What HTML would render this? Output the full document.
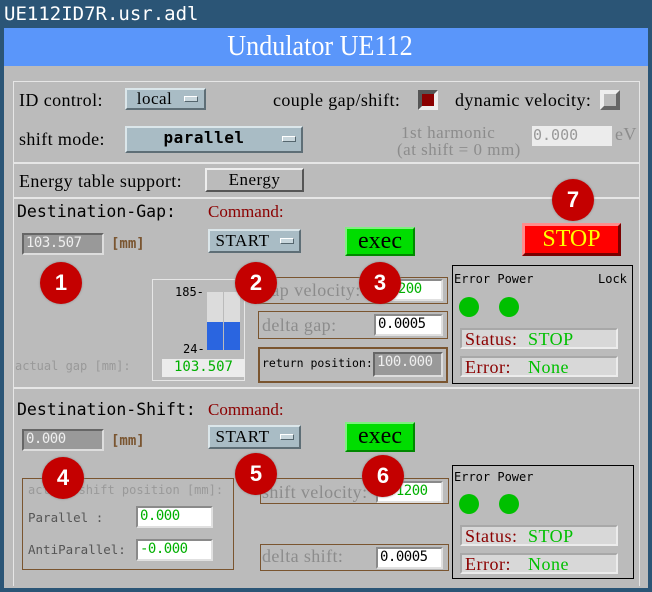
<!DOCTYPE html>
<html><head><meta charset="utf-8"><style>
*{margin:0;padding:0;box-sizing:border-box}
body{width:652px;height:592px;background:#2b5576;position:relative;overflow:hidden;font-family:"DejaVu Sans Condensed","Liberation Sans",sans-serif;}
.a{position:absolute;white-space:nowrap}
.t{font-size:18px;color:#000;font-family:"Liberation Serif",serif;letter-spacing:0.4px;line-height:20px}
.g{color:#8c8c8c}
.m{font-family:"DejaVu Sans Mono","Liberation Mono",monospace}
.btn{background:#a9bcc5;border:2px solid;border-color:#dbe6ea #5e6e76 #5e6e76 #dbe6ea;font-family:"Liberation Serif",serif;font-size:17px;text-align:center;letter-spacing:0.5px}
.ind{position:absolute;width:14px;height:6px;background:#c8d6dc;border:1px solid;border-color:#fff #55666e #55666e #fff}
.in{background:#fff;border:2px solid;border-color:#8a8a8a #e0e0e0 #e0e0e0 #8a8a8a;font-family:"DejaVu Sans Mono",monospace;font-size:14px;padding-left:2px;line-height:17px;letter-spacing:-0.5px}
.bx{border:1px solid #7a5530}
.badge{position:absolute;width:42px;height:42px;border-radius:50%;background:#c40000;color:#fff;font:bold 22px "Liberation Sans",sans-serif;text-align:center;line-height:42px;box-shadow:0 0 2px #888}
.led{position:absolute;width:20px;height:20px;border-radius:50%;background:#00c000}
.fld{position:absolute;background:#d8d8d8;border:2px solid;border-color:#a8a8a8 #ececec #ececec #a8a8a8;font-family:"Liberation Serif",serif;font-size:18px;letter-spacing:0.5px}
.exec{background:#00dd00;border:2px solid;border-color:#7ff07f #008800 #008800 #7ff07f;font-family:"Liberation Serif",serif;font-size:24px;text-align:center;line-height:24px}
</style></head><body>
<div class="a m" style="left:4px;top:3px;color:#fff;font-size:19px">UE112ID7R.usr.adl</div>
<div class="a" style="left:4px;top:28px;width:644px;height:560px;background:#bbbbbb"></div>
<div class="a" style="left:4px;top:28px;width:644px;height:38px;background:#5a96fa"></div>
<div class="a" style="left:217px;top:30px;width:200px;text-align:center;color:#fff;font:29px 'Liberation Serif',serif"><span style="display:inline-block;transform:scaleX(0.9)">Undulator UE112</span></div>
<!-- frame lines -->
<div class="a" style="left:13px;top:81px;width:627px;height:505px;border:1px solid #e6e6e6;border-bottom:none"></div>
<div class="a" style="left:13px;top:162px;width:627px;height:2px;background:#e6e6e6"></div>
<div class="a" style="left:13px;top:197px;width:627px;height:2px;background:#e6e6e6"></div>
<div class="a" style="left:13px;top:387px;width:627px;height:2px;background:#e6e6e6"></div>
<!-- row1 -->
<div class="a t" style="left:19px;top:90px">ID control:</div>
<div class="a btn" style="left:125px;top:88px;width:81px;height:22px;line-height:18px;padding-right:22px">local</div><div class="ind" style="left:184px;top:96px"></div>
<div class="a t" style="left:273px;top:90px">couple gap/shift:</div>
<div class="a" style="left:418px;top:90px;width:20px;height:20px;border:4px solid;border-color:#555 #eee #eee #555;background:#8b0000"></div>
<div class="a t" style="left:455px;top:90px">dynamic velocity:</div>
<div class="a" style="left:600px;top:90px;width:20px;height:20px;border:4px solid;border-color:#eee #666 #666 #eee;background:#bbb"></div>
<!-- row2 -->
<div class="a t" style="left:19px;top:129px">shift mode:</div>
<div class="a btn" style="left:125px;top:126px;width:178px;height:27px;line-height:22px;font:bold 16px 'DejaVu Sans Mono',monospace;padding-right:20px">parallel</div><div class="ind" style="left:282px;top:136px"></div>
<div class="a t g" style="left:401px;top:124px;font-size:17px;letter-spacing:0.5px;line-height:18px">1st harmonic</div>
<div class="a t g" style="left:397px;top:141px;font-size:17px;letter-spacing:0.5px;line-height:18px">(at shift = 0 mm)</div>
<div class="a m" style="left:532px;top:126px;width:80px;height:20px;background:#ececec;color:#999;font-size:15px;padding-left:1px">0.000</div>
<div class="a t g" style="left:615px;top:124px">eV</div>
<!-- row3 -->
<div class="a t" style="left:19px;top:171px">Energy table support:</div>
<div class="a btn" style="left:205px;top:168px;width:99px;height:24px;background:#bbb;border-color:#eee #555 #555 #eee;line-height:20px">Energy</div>
<!-- gap -->
<div class="a m" style="left:17px;top:202px;font-size:16.5px">Destination-Gap:</div>
<div class="a t" style="left:208px;top:202px;color:#8b0000;font-size:17px;letter-spacing:0">Command:</div>
<div class="a in" style="left:22px;top:233px;width:82px;height:22px;background:#999;color:#eee;border-color:#666 #ddd #ddd #666">103.507</div>
<div class="a m" style="left:111px;top:236px;color:#7a5530;font-weight:bold;font-size:14px">[mm]</div>
<div class="a btn" style="left:208px;top:229px;width:93px;height:24px;line-height:20px;padding-right:24px">START</div><div class="ind" style="left:280px;top:238px"></div>
<div class="a exec" style="left:345px;top:227px;width:70px;height:29px">exec</div>
<div class="a" style="left:522px;top:223px;width:99px;height:33px;background:#ff0000;border:3px solid;border-color:#ff8c8c #7a0000 #7a0000 #ff8c8c;color:#ffff00;font:24px 'Liberation Serif',serif;text-align:center;line-height:26px">STOP</div>
<div class="a" style="left:152px;top:279px;width:93px;height:102px;border:1px solid #e6e6e6"></div>
<div class="a m" style="left:175px;top:285px;font-size:12px">185-</div>
<div class="a m" style="left:183px;top:342px;font-size:12px">24-</div>
<div class="a" style="left:207px;top:292px;width:33px;height:30px;background:#dcdcdc"></div>
<div class="a" style="left:207px;top:322px;width:33px;height:28px;background:#2a65e0"></div>
<div class="a" style="left:223px;top:292px;width:1px;height:58px;background:#bbb"></div>
<div class="a m" style="left:162px;top:359px;width:83px;height:18px;background:#ececec;color:#00b000;font-size:14px;text-align:center">103.507</div>
<div class="a m g" style="left:15px;top:359px;font-size:12px;color:#999">actual gap [mm]:</div>
<div class="a bx" style="left:258px;top:277px;width:190px;height:27px"></div>
<div class="a t g" style="left:262px;top:280px">gap velocity:</div>
<div class="a in" style="left:378px;top:279px;width:65px;height:22px;color:#00b000">0.200</div>
<div class="a bx" style="left:258px;top:311px;width:190px;height:28px"></div>
<div class="a t g" style="left:262px;top:315px">delta gap:</div>
<div class="a in" style="left:374px;top:314px;width:69px;height:22px">0.0005</div>
<div class="a" style="left:258px;top:347px;width:190px;height:36px;border:2px solid #7a5530"></div>
<div class="a m" style="left:262px;top:356px;font-size:11.5px">return position:</div>
<div class="a in" style="left:373px;top:352px;width:70px;height:25px;background:#999;color:#eee;border-color:#666 #ddd #ddd #666">100.000</div>
<div class="a" style="left:452px;top:265px;width:181px;height:119px;border:1px solid #000"></div>
<div class="a m" style="left:454px;top:272px;font-size:12px">Error Power</div>
<div class="a m" style="left:598px;top:272px;font-size:12px">Lock</div>
<div class="led" style="left:459px;top:297px"></div><div class="led" style="left:499px;top:297px"></div>
<div class="fld" style="left:460px;top:328px;width:158px;height:21px"><span class="a" style="left:3px;top:-1px;color:#8b0000">Status:</span><span class="a" style="left:66px;top:-1px;color:#00c000">STOP</span></div>
<div class="fld" style="left:460px;top:356px;width:158px;height:21px"><span class="a" style="left:3px;top:-1px;color:#8b0000">Error:</span><span class="a" style="left:66px;top:-1px;color:#00c000">None</span></div>
<!-- shift -->
<div class="a m" style="left:17px;top:400px;font-size:16.5px">Destination-Shift:</div>
<div class="a t" style="left:208px;top:400px;color:#8b0000;font-size:17px;letter-spacing:0">Command:</div>
<div class="a in" style="left:22px;top:429px;width:82px;height:22px;background:#999;color:#eee;border-color:#666 #ddd #ddd #666">0.000</div>
<div class="a m" style="left:111px;top:433px;color:#7a5530;font-weight:bold;font-size:14px">[mm]</div>
<div class="a btn" style="left:208px;top:425px;width:93px;height:24px;line-height:20px;padding-right:24px">START</div><div class="ind" style="left:280px;top:434px"></div>
<div class="a exec" style="left:345px;top:422px;width:70px;height:30px">exec</div>
<div class="a bx" style="left:22px;top:478px;width:212px;height:92px"></div>
<div class="a m" style="left:28px;top:483px;font-size:12px;color:#999">actual shift position [mm]:</div>
<div class="a m" style="left:28px;top:510px;font-size:12.5px;color:#555">Parallel    :</div>
<div class="a m" style="left:28px;top:542px;font-size:12.5px;color:#555">AntiParallel:</div>
<div class="a in" style="left:136px;top:506px;width:77px;height:22px;color:#00b000">0.000</div>
<div class="a in" style="left:136px;top:539px;width:77px;height:22px;color:#00b000">-0.000</div>
<div class="a bx" style="left:260px;top:478px;width:189px;height:26px"></div>
<div class="a t g" style="left:262px;top:482px">shift velocity:</div>
<div class="a in" style="left:376px;top:481px;width:67px;height:22px;color:#00b000">0.1200</div>
<div class="a bx" style="left:260px;top:544px;width:189px;height:27px"></div>
<div class="a t g" style="left:262px;top:546px">delta shift:</div>
<div class="a in" style="left:376px;top:547px;width:67px;height:22px">0.0005</div>
<div class="a" style="left:452px;top:465px;width:182px;height:114px;border:1px solid #000"></div>
<div class="a m" style="left:454px;top:470px;font-size:12px">Error Power</div>
<div class="led" style="left:459px;top:494px"></div><div class="led" style="left:499px;top:494px"></div>
<div class="fld" style="left:460px;top:525px;width:158px;height:21px"><span class="a" style="left:3px;top:-1px;color:#8b0000">Status:</span><span class="a" style="left:66px;top:-1px;color:#00c000">STOP</span></div>
<div class="fld" style="left:460px;top:553px;width:158px;height:21px"><span class="a" style="left:3px;top:-1px;color:#8b0000">Error:</span><span class="a" style="left:66px;top:-1px;color:#00c000">None</span></div>
<!-- badges -->
<div class="badge" style="left:40px;top:262px">1</div>
<div class="badge" style="left:235px;top:262px">2</div>
<div class="badge" style="left:359px;top:262px">3</div>
<div class="badge" style="left:552px;top:179px">7</div>
<div class="badge" style="left:42px;top:457px">4</div>
<div class="badge" style="left:235px;top:453px">5</div>
<div class="badge" style="left:362px;top:455px">6</div>
</body></html>
